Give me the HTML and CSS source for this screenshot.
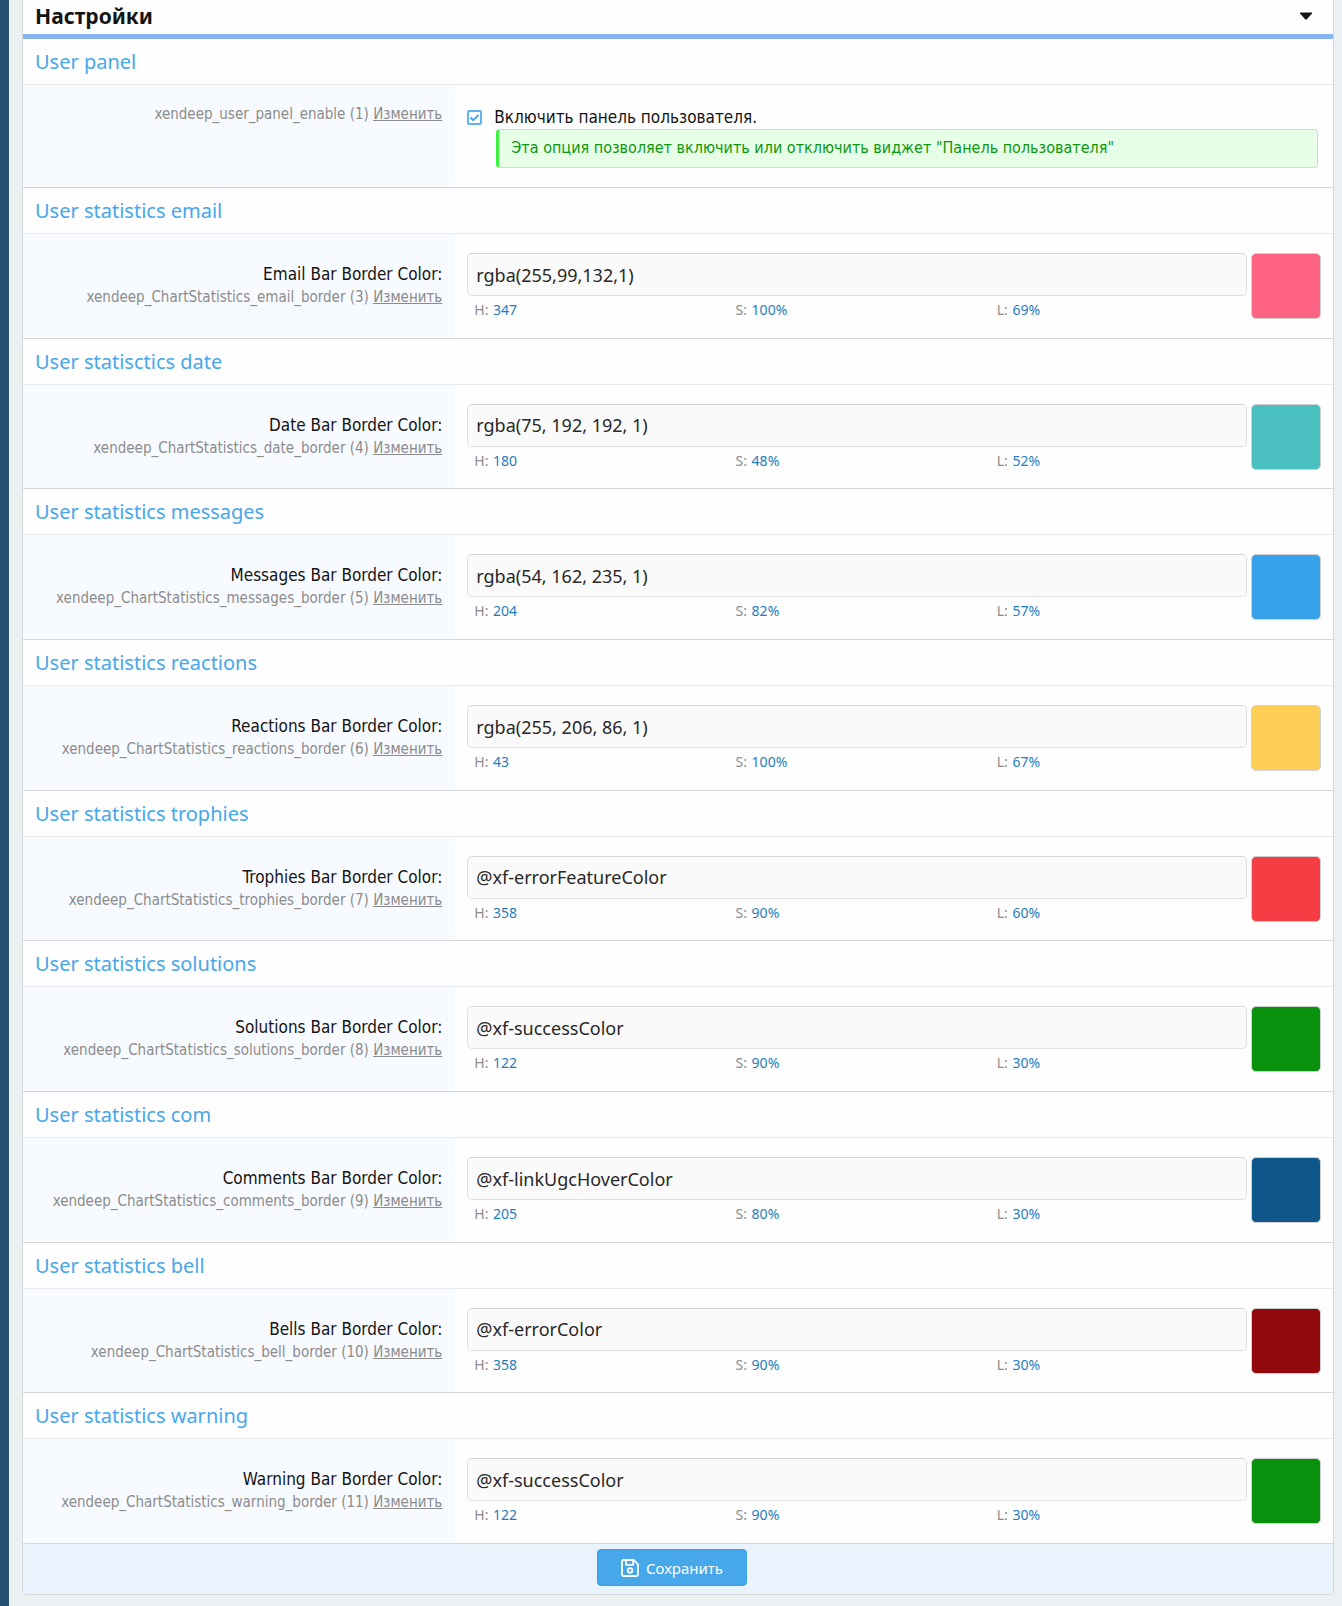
FILE: index.html
```html
<!DOCTYPE html>
<html lang="ru">
<head>
    <meta charset="UTF-8">
    <meta name="viewport" content="width=device-width, initial-scale=1.0">
    <title>Настройки</title>
    <link rel="stylesheet" href="styles.css">
</head>
<body>
    <form class="block" id="optionsForm">
        <h1 class="block-header">
            Настройки
            <svg class="caret" width="12" height="8" viewBox="0 0 12 8"><path d="M0 0.5h12v1L6.6 7.4h-1.2L0 1.5z" fill="#141414"/></svg>
        </h1>

        <section class="group group--first">
            <h2 class="group-title">User panel</h2>
            <div class="row">
                <div class="row-label">
                    <div class="row-hint">xendeep_user_panel_enable (1) <a href="#">Изменить</a></div>
                </div>
                <div class="row-main">
                    <label class="choice">
                        <input type="checkbox" checked>
                        <span>Включить панель пользователя.</span>
                    </label>
                    <div class="explain">Эта опция позволяет включить или отключить виджет "Панель пользователя"</div>
                </div>
            </div>
        </section>

        <section class="group">
            <h2 class="group-title">User statistics email</h2>
            <div class="row">
                <div class="row-label">
                    <label for="emailBorder">Email Bar Border Color:</label>
                    <div class="row-hint">xendeep_ChartStatistics_email_border (3) <a href="#">Изменить</a></div>
                </div>
                <div class="row-main color">
                    <div class="color-value">
                        <input type="text" id="emailBorder" value="rgba(255,99,132,1)">
                        <div class="hsl"><span>H: <b>347</b></span><span>S: <b>100%</b></span><span>L: <b>69%</b></span></div>
                    </div>
                    <button type="button" class="swatch swatch--pink" aria-label="Email Bar Border Color"></button>
                </div>
            </div>
        </section>

        <section class="group">
            <h2 class="group-title">User statisctics date</h2>
            <div class="row">
                <div class="row-label">
                    <label for="dateBorder">Date Bar Border Color:</label>
                    <div class="row-hint">xendeep_ChartStatistics_date_border (4) <a href="#">Изменить</a></div>
                </div>
                <div class="row-main color">
                    <div class="color-value">
                        <input type="text" id="dateBorder" value="rgba(75, 192, 192, 1)">
                        <div class="hsl"><span>H: <b>180</b></span><span>S: <b>48%</b></span><span>L: <b>52%</b></span></div>
                    </div>
                    <button type="button" class="swatch swatch--teal" aria-label="Date Bar Border Color"></button>
                </div>
            </div>
        </section>

        <section class="group">
            <h2 class="group-title">User statistics messages</h2>
            <div class="row">
                <div class="row-label">
                    <label for="messagesBorder">Messages Bar Border Color:</label>
                    <div class="row-hint">xendeep_ChartStatistics_messages_border (5) <a href="#">Изменить</a></div>
                </div>
                <div class="row-main color">
                    <div class="color-value">
                        <input type="text" id="messagesBorder" value="rgba(54, 162, 235, 1)">
                        <div class="hsl"><span>H: <b>204</b></span><span>S: <b>82%</b></span><span>L: <b>57%</b></span></div>
                    </div>
                    <button type="button" class="swatch swatch--blue" aria-label="Messages Bar Border Color"></button>
                </div>
            </div>
        </section>

        <section class="group">
            <h2 class="group-title">User statistics reactions</h2>
            <div class="row">
                <div class="row-label">
                    <label for="reactionsBorder">Reactions Bar Border Color:</label>
                    <div class="row-hint">xendeep_ChartStatistics_reactions_border (6) <a href="#">Изменить</a></div>
                </div>
                <div class="row-main color">
                    <div class="color-value">
                        <input type="text" id="reactionsBorder" value="rgba(255, 206, 86, 1)">
                        <div class="hsl"><span>H: <b>43</b></span><span>S: <b>100%</b></span><span>L: <b>67%</b></span></div>
                    </div>
                    <button type="button" class="swatch swatch--yellow" aria-label="Reactions Bar Border Color"></button>
                </div>
            </div>
        </section>

        <section class="group">
            <h2 class="group-title">User statistics trophies</h2>
            <div class="row">
                <div class="row-label">
                    <label for="trophiesBorder">Trophies Bar Border Color:</label>
                    <div class="row-hint">xendeep_ChartStatistics_trophies_border (7) <a href="#">Изменить</a></div>
                </div>
                <div class="row-main color">
                    <div class="color-value">
                        <input type="text" id="trophiesBorder" value="@xf-errorFeatureColor">
                        <div class="hsl"><span>H: <b>358</b></span><span>S: <b>90%</b></span><span>L: <b>60%</b></span></div>
                    </div>
                    <button type="button" class="swatch swatch--red" aria-label="Trophies Bar Border Color"></button>
                </div>
            </div>
        </section>

        <section class="group">
            <h2 class="group-title">User statistics solutions</h2>
            <div class="row">
                <div class="row-label">
                    <label for="solutionsBorder">Solutions Bar Border Color:</label>
                    <div class="row-hint">xendeep_ChartStatistics_solutions_border (8) <a href="#">Изменить</a></div>
                </div>
                <div class="row-main color">
                    <div class="color-value">
                        <input type="text" id="solutionsBorder" value="@xf-successColor">
                        <div class="hsl"><span>H: <b>122</b></span><span>S: <b>90%</b></span><span>L: <b>30%</b></span></div>
                    </div>
                    <button type="button" class="swatch swatch--green" aria-label="Solutions Bar Border Color"></button>
                </div>
            </div>
        </section>

        <section class="group">
            <h2 class="group-title">User statistics com</h2>
            <div class="row">
                <div class="row-label">
                    <label for="commentsBorder">Comments Bar Border Color:</label>
                    <div class="row-hint">xendeep_ChartStatistics_comments_border (9) <a href="#">Изменить</a></div>
                </div>
                <div class="row-main color">
                    <div class="color-value">
                        <input type="text" id="commentsBorder" value="@xf-linkUgcHoverColor">
                        <div class="hsl"><span>H: <b>205</b></span><span>S: <b>80%</b></span><span>L: <b>30%</b></span></div>
                    </div>
                    <button type="button" class="swatch swatch--navy" aria-label="Comments Bar Border Color"></button>
                </div>
            </div>
        </section>

        <section class="group">
            <h2 class="group-title">User statistics bell</h2>
            <div class="row">
                <div class="row-label">
                    <label for="bellBorder">Bells Bar Border Color:</label>
                    <div class="row-hint">xendeep_ChartStatistics_bell_border (10) <a href="#">Изменить</a></div>
                </div>
                <div class="row-main color">
                    <div class="color-value">
                        <input type="text" id="bellBorder" value="@xf-errorColor">
                        <div class="hsl"><span>H: <b>358</b></span><span>S: <b>90%</b></span><span>L: <b>30%</b></span></div>
                    </div>
                    <button type="button" class="swatch swatch--maroon" aria-label="Bells Bar Border Color"></button>
                </div>
            </div>
        </section>

        <section class="group">
            <h2 class="group-title">User statistics warning</h2>
            <div class="row">
                <div class="row-label">
                    <label for="warningBorder">Warning Bar Border Color:</label>
                    <div class="row-hint">xendeep_ChartStatistics_warning_border (11) <a href="#">Изменить</a></div>
                </div>
                <div class="row-main color">
                    <div class="color-value">
                        <input type="text" id="warningBorder" value="@xf-successColor">
                        <div class="hsl"><span>H: <b>122</b></span><span>S: <b>90%</b></span><span>L: <b>30%</b></span></div>
                    </div>
                    <button type="button" class="swatch swatch--green" aria-label="Warning Bar Border Color"></button>
                </div>
            </div>
        </section>

        <div class="submit-row">
            <button type="submit" class="button-save">
                <svg width="18" height="18" viewBox="0 0 18 18" fill="none" stroke="currentColor" stroke-width="1.8" stroke-linejoin="round">
                    <path d="M2.5 1h10.2L17 5.3v10.2a1.5 1.5 0 0 1-1.5 1.5h-13A1.5 1.5 0 0 1 1 15.5v-13A1.5 1.5 0 0 1 2.5 1z"/>
                    <path d="M5 1v4.8h7.2V1"/>
                    <circle cx="9" cy="11.4" r="2.3"/>
                </svg>
                Сохранить
            </button>
        </div>
    </form>
</body>
</html>
```

FILE: styles.css
```css
* {
    box-sizing: border-box;
}

body {
    margin: 0;
    min-height: 100vh;
    display: flex;
    flex-direction: column;
    padding: 0 8px 11px 13px;
    border-left: 9px solid #265070;
    background: #ebf0f3;
    color: #141414;
    font-family: 'DejaVu Sans Condensed', 'Noto Sans', sans-serif;
    font-size: 17px;
    line-height: 22px;
}

.block {
    flex: 1;
    display: flex;
    flex-direction: column;
    background: #fefefe;
    border: 1px solid #d8d8d8;
    border-top: none;
    border-radius: 0 0 5px 5px;
}

.block-header {
    display: flex;
    align-items: center;
    justify-content: space-between;
    margin: 0;
    padding: 2px 21px 4px 12px;
    border-bottom: 5px solid #87b4ec;
    font-family: 'Noto Sans', sans-serif;
    font-size: 21px;
    font-weight: 700;
    line-height: 28px;
}

.group {
    flex: 1 0 auto;
    display: flex;
    flex-direction: column;
    border-bottom: 1px solid #d8d8d8;
}

.group--first {
    flex-grow: 0;
}

.group-title {
    margin: 0;
    padding: 9px 12px 8px;
    border-bottom: 1px solid #e9e9e9;
    color: #47a7eb;
    font-family: 'Noto Sans', sans-serif;
    font-size: 20px;
    font-weight: 400;
    line-height: 28px;
}

.row {
    flex: 1;
    display: flex;
}

.row-label {
    flex: 0 0 33%;
    padding: 18px 13px;
    background: #f7faff;
    text-align: right;
}

.row-label label {
    display: block;
    padding: 11px 0 1px;
}

.row-hint {
    color: #8c8c8c;
    font-size: 15px;
}

.row-hint a {
    color: inherit;
}

.row-main {
    flex: 1;
    min-width: 0;
    padding: 19px 12px 18px;
}

.choice {
    display: flex;
    align-items: center;
    gap: 12px;
    padding-top: 2px;
}

.choice input {
    appearance: none;
    width: 15px;
    height: 15px;
    margin: 0;
    border: 2px solid #60b4f0;
    border-radius: 2px;
    background: no-repeat center/11px url("data:image/svg+xml,%3Csvg xmlns='http://www.w3.org/2000/svg' viewBox='0 0 11 11'%3E%3Cpath d='M1.5 5.5l2.700 2.700L9.500 3' fill='none' stroke='%2347a7eb' stroke-width='1.800'/%3E%3C/svg%3E");
}

.explain {
    margin: 1px 3px 1px 29px;
    padding: 7px 12px 8px;
    border: 1px solid #d8d8d8;
    border-left: 3px solid #3df23d;
    border-radius: 4px;
    background: #e6ffe6;
    color: #0f9610;
    font-size: 16px;
}

.color {
    display: flex;
    align-items: flex-start;
    gap: 4px;
}

.color-value {
    flex: 1;
    min-width: 0;
}

.color-value input {
    display: block;
    width: 100%;
    height: 43px;
    padding: 0 8px;
    border: 1px solid #dfdfdf;
    border-top-color: #d8d8d8;
    border-radius: 5px;
    background: #fafafa;
    color: #282828;
    font-family: 'Noto Sans', sans-serif;
    font-size: 18px;
}

.hsl {
    display: grid;
    grid-template-columns: repeat(3, 1fr);
    gap: 4px;
    padding-top: 4px;
    color: #8c8c8c;
    font-family: 'Noto Sans', sans-serif;
    font-size: 14px;
    line-height: 19px;
}

.hsl span {
    padding-left: 7px;
}

.hsl b {
    margin-left: 1px;
    color: #1f7dbf;
    font-weight: 400;
}

.swatch {
    width: 70px;
    height: 66px;
    padding: 0;
    border: 1px solid #d0d0d0;
    border-radius: 5px;
    cursor: pointer;
}

.swatch--pink { background: #ff6384; }
.swatch--teal { background: #4bc0c0; }
.swatch--blue { background: #36a2eb; }
.swatch--yellow { background: #ffce56; }
.swatch--red { background: #f53d43; }
.swatch--green { background: #08910d; }
.swatch--navy { background: #0f568a; }
.swatch--maroon { background: #91080d; }

.submit-row {
    display: flex;
    justify-content: center;
    padding: 5px 12px 8px 0;
    border-radius: 0 0 5px 5px;
    background: #e8f3fd;
}

.button-save {
    display: flex;
    align-items: center;
    gap: 7px;
    height: 37px;
    padding: 0 23px;
    border: 1px solid #3b9fe8;
    border-radius: 4px;
    background: #47a7eb;
    color: #fefefe;
    font-family: 'Noto Sans', sans-serif;
    font-size: 15px;
    cursor: pointer;
}
```
